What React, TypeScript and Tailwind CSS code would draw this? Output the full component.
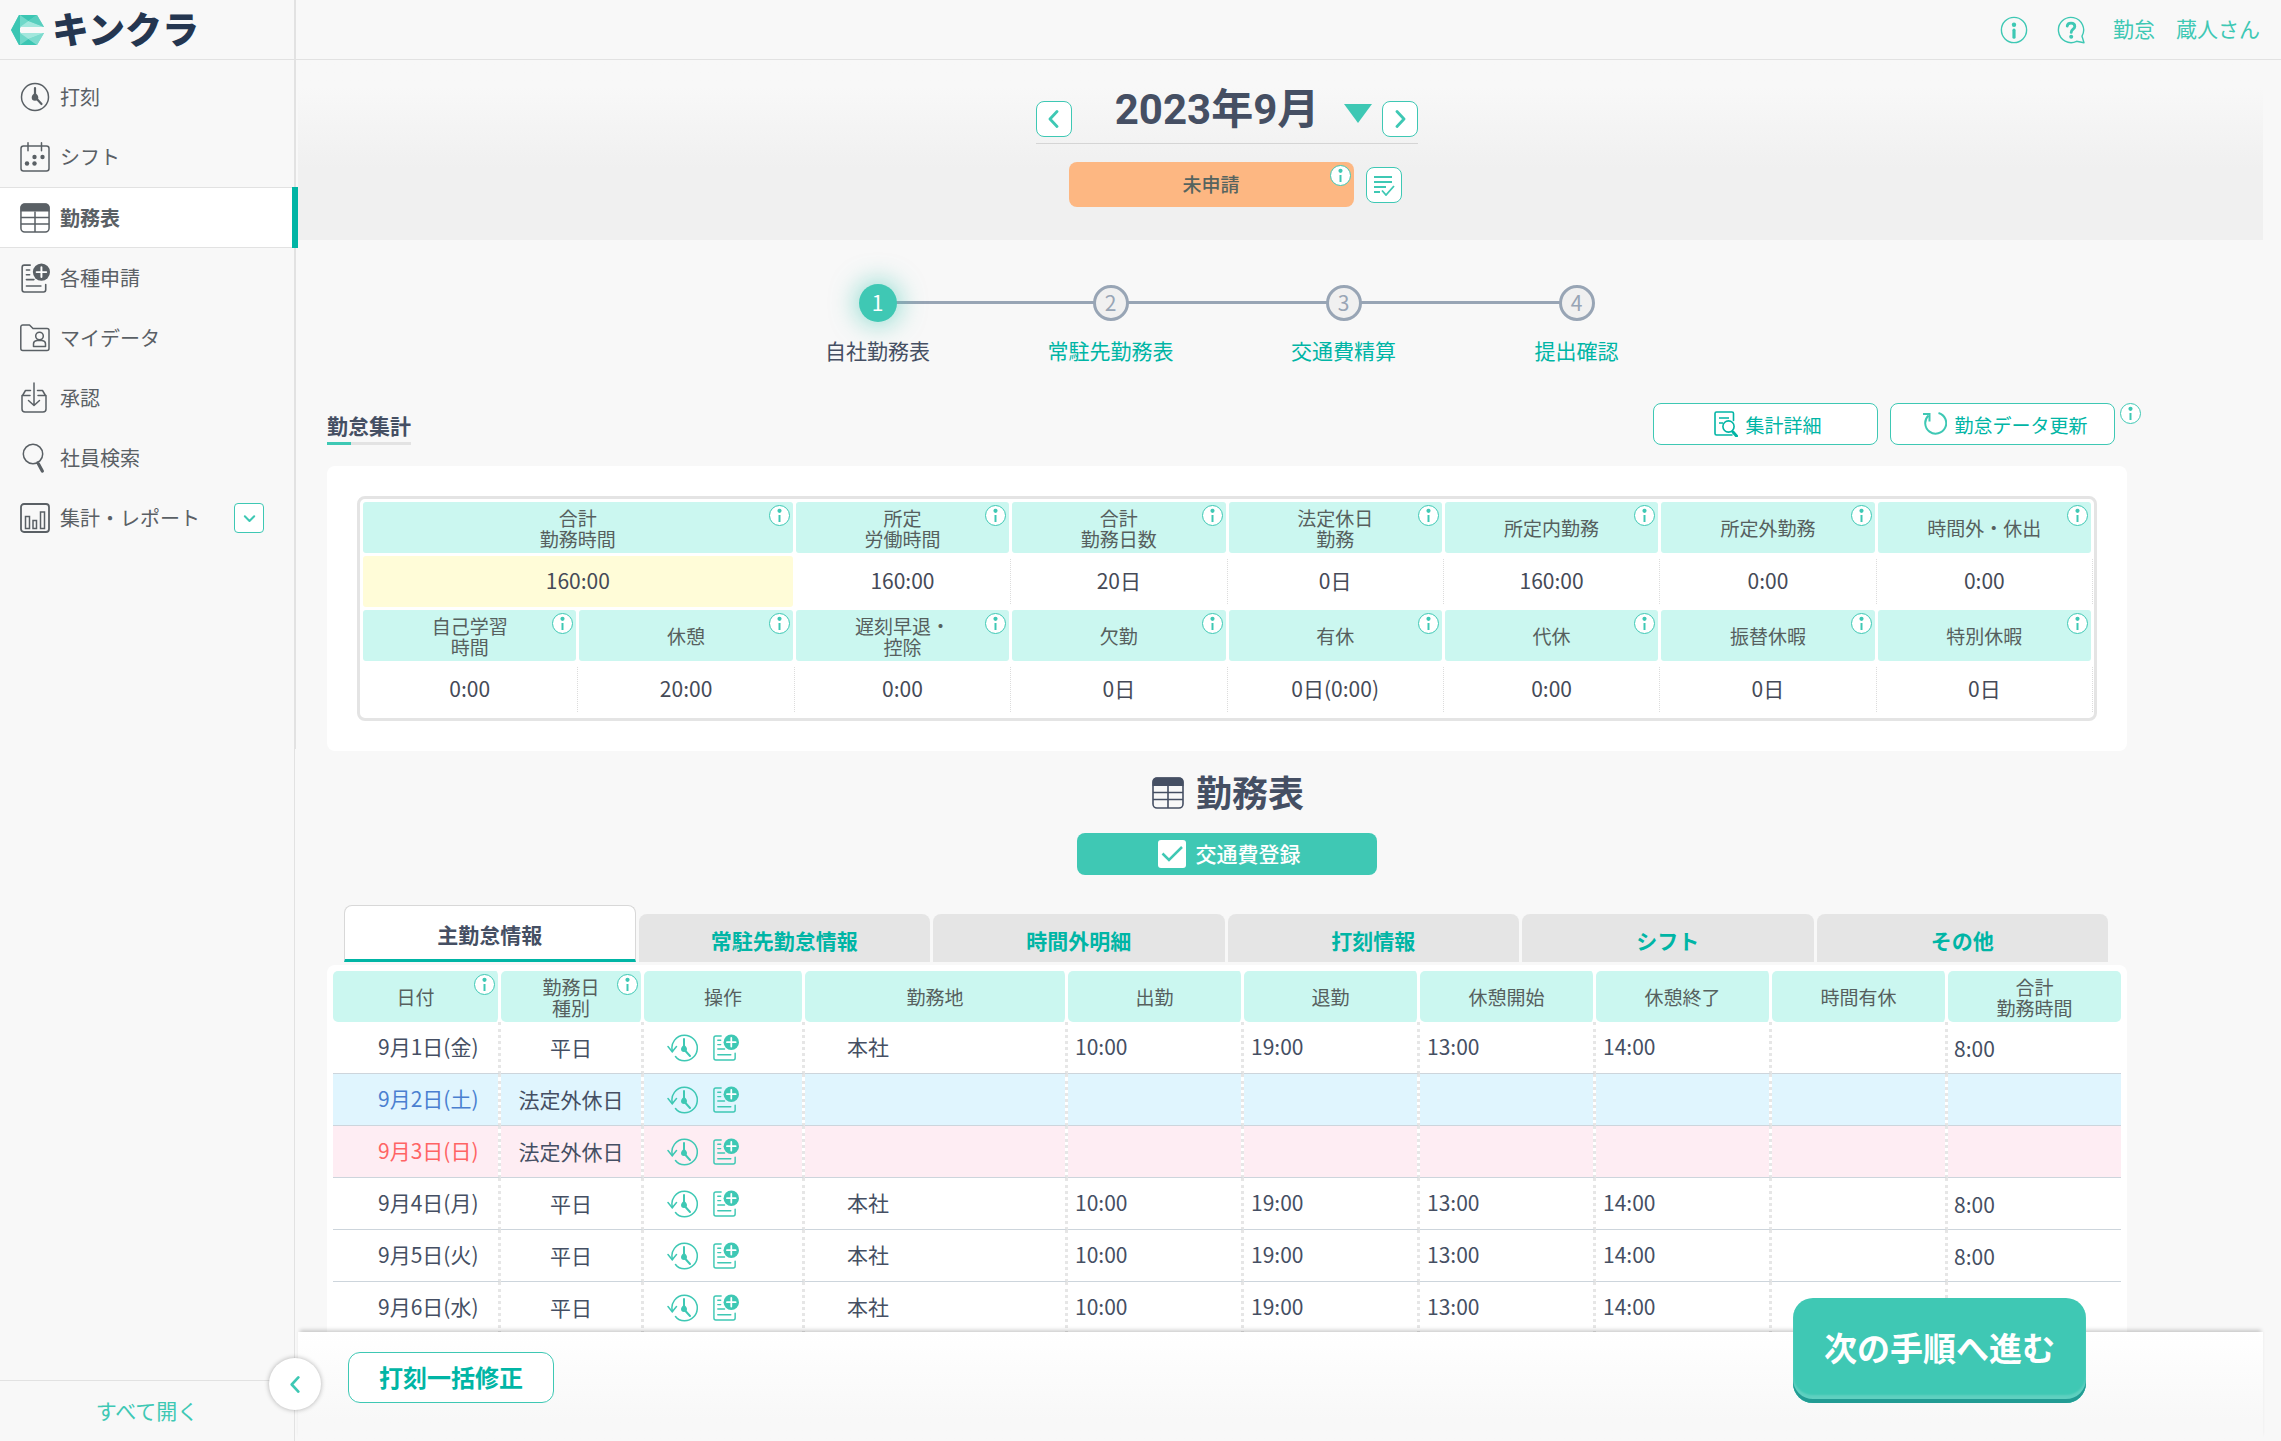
import React from "react";

type IconProps = { className?: string };

const InfoIcon = ({ className = "size-[21px]" }: IconProps) => (
  <svg viewBox="0 0 21 21" className={className} aria-hidden="true">
    <circle cx="10.5" cy="10.5" r="10" fill="#fff" stroke="#3ec8b4" />
    <circle cx="10.5" cy="5.8" r="2.1" fill="#3ec8b4" />
    <path d="M10.5 10v7" stroke="#3ec8b4" strokeWidth="2" />
  </svg>
);

const HeaderInfoIcon = () => (
  <svg viewBox="0 0 28 28" className="size-[28px]" fill="none" stroke="#3ec8b4" aria-hidden="true">
    <circle cx="14" cy="14" r="12.6" strokeWidth="1.4" />
    <circle cx="14" cy="8.8" r="2.2" fill="#3ec8b4" stroke="none" />
    <path d="M14 14.2v7" strokeWidth="3.2" strokeLinecap="round" />
  </svg>
);

const HelpIcon = () => (
  <svg viewBox="0 0 28 28" className="size-[28px]" fill="none" stroke="#3ec8b4" strokeLinejoin="round" aria-hidden="true">
    <path d="M25 20.2A12.6 12.6 0 1 0 19.6 25.3l7.4 1.4z" strokeWidth="1.4" />
    <path d="M10.2 10.2c.3-4 7.6-4 7.6.2 0 2.8-3.6 2.8-3.6 6" strokeWidth="2.8" strokeLinecap="round" />
    <circle cx="14.2" cy="20.8" r="2" fill="#3ec8b4" stroke="none" />
  </svg>
);

const ClockIcon = () => (
  <svg viewBox="0 0 30 30" className="size-[30px]" fill="none" stroke="currentColor" aria-hidden="true">
    <circle cx="15" cy="15" r="13.5" strokeWidth="1.5" />
    <path d="M15 6v9M15 15l6.5 7" strokeWidth="2.2" strokeLinecap="round" />
    <path d="M15 10.5c1.5 1.8 3.3 2.8 3.3 5a3.3 3.3 0 0 1-6.6 0c0-2.2 1.8-3.2 3.3-5z" fill="currentColor" stroke="none" />
  </svg>
);

const ShiftIcon = () => (
  <svg viewBox="0 0 30 30" className="size-[30px]" fill="none" stroke="currentColor" strokeWidth="1.5" aria-hidden="true">
    <rect x="1" y="4" width="28" height="25" rx="2.5" />
    <path d="M8 .8v8M21.5 .8v8" strokeLinecap="round" />
    <g fill="currentColor" stroke="none">
      <circle cx="14.5" cy="15" r="2.2" />
      <circle cx="22.5" cy="15" r="2.2" />
      <circle cx="7" cy="21.5" r="2.2" />
      <circle cx="14.5" cy="21.5" r="2.2" />
    </g>
  </svg>
);

const TableIcon = ({ className = "size-[30px]" }: IconProps) => (
  <svg viewBox="0 0 32 32" className={className} fill="none" stroke="currentColor" aria-hidden="true">
    <rect x="1" y="1" width="30" height="30" rx="4" strokeWidth="1.6" />
    <path d="M.5 9V5A4.5 4.5 0 0 1 5 .5h22A4.5 4.5 0 0 1 31.5 5v4z" fill="currentColor" stroke="none" />
    <path d="M1 15.5h30M1 22.5h30M16 9v22" strokeWidth="1.6" />
  </svg>
);

const FormPlusIcon = ({ className = "size-[30px]" }: IconProps) => (
  <svg viewBox="0 0 28 28" className={className} fill="none" stroke="currentColor" strokeWidth="1.5" strokeLinecap="round" aria-hidden="true">
    <path d="M9.5 2H4A2 2 0 0 0 2 4v21a2 2 0 0 0 2 2h18a2 2 0 0 0 2-2v-5" />
    <path d="M6 6.5h3M6 11h3M6 15.5h7M6 21.5h13.5" />
    <circle cx="20" cy="8.500" r="8" fill="currentColor" stroke="none" />
    <path d="M20 4v9M15.5 8.500h9" stroke="#fff" strokeWidth="1.8" />
  </svg>
);

const FolderIcon = () => (
  <svg viewBox="0 0 30 30" className="size-[30px]" fill="none" stroke="currentColor" strokeWidth="1.5" strokeLinejoin="round" aria-hidden="true">
    <path d="M.8 25.5V4A2 2 0 0 1 2.8 2h6.7L13 5.5h14a2 2 0 0 1 2 2v18a2 2 0 0 1-2 2H2.8a2 2 0 0 1-2-2z" />
    <circle cx="19.5" cy="13" r="3.8" />
    <path d="M13.5 23.5v-2.7c0-2 1.5-3 3.5-3.3h5c2 .3 3.5 1.3 3.5 3.3v2.7z" />
  </svg>
);

const ApproveIcon = () => (
  <svg viewBox="0 0 30 32" className="h-[32px] w-[30px]" fill="none" stroke="currentColor" strokeWidth="1.5" strokeLinecap="round" strokeLinejoin="round" aria-hidden="true">
    <path d="M14 1v22M8.500 18.5l5.5 5 5.500-5" />
    <path d="M10.500 8.500H5.500l-3 5M17.500 8.500h5l3 5M10 13.500H2V27a3 3 0 0 0 3 3h18a3 3 0 0 0 3-3V13.500h-8" />
  </svg>
);

const SearchIcon = () => (
  <svg viewBox="0 0 30 30" className="size-[30px]" fill="none" stroke="currentColor" aria-hidden="true">
    <circle cx="13" cy="11" r="9.7" strokeWidth="1.5" />
    <path d="M17 18.5l2 4" strokeWidth="1.5" />
    <path d="M18.5 21l3.8 7" strokeWidth="3.2" strokeLinecap="round" />
  </svg>
);

const ReportIcon = () => (
  <svg viewBox="0 0 30 30" className="size-[30px]" fill="none" stroke="currentColor" strokeWidth="1.5" aria-hidden="true">
    <rect x="1" y="1" width="28" height="28" rx="3" strokeWidth="1.8" />
    <path d="M5.5 13.5h4v12h-4zM13 17.5h3.5v8H13zM20.5 9h4v16.5h-4z" />
  </svg>
);

const Chevron = ({ d, className = "size-[18px]" }: { d: string; className?: string }) => (
  <svg viewBox="0 0 18 18" className={className} fill="none" stroke="#3ec8b4" strokeWidth="2.8" strokeLinecap="round" strokeLinejoin="round" aria-hidden="true">
    <path d={d} />
  </svg>
);
const LEFT = "M12 1.5L5 9l7 7.5";
const RIGHT = "M6 1.5L13 9l-7 7.5";

const HistoryIcon = () => (
  <svg viewBox="0 0 31 28" className="h-[28px] w-[31px]" fill="none" stroke="currentColor" strokeWidth="1.5" strokeLinecap="round" aria-hidden="true">
    <path d="M5.5 17.5A12.6 12.6 0 0 1 17.500 1.200a12.800 12.800 0 0 1 0 25.600c-4 0-7-1.500-9-4.300" />
    <path d="M1 12.5l4.2 5.2 4.3-5.2" />
    <path d="M17 5v9M18.5 17l4.5 5" strokeWidth="2" />
    <path d="M17 10.5c1 1.5 3 2.500 3 4.5a3 3 0 0 1-6 0c0-2 2-3 3-4.5z" fill="currentColor" stroke="none" />
  </svg>
);

const Logo = () => (
  <svg viewBox="0 0 33 30" className="h-[30px] w-[33px]" aria-hidden="true">
    <path d="M8 0h18l7 12H10v6h23l-7 12H8L0 15z" fill="#6fd8c9" />
    <path d="M8 0L0 15l8 15h1V0z" fill="#3cc6b3" />
    <path d="M9 0h17l-8.500 6z" fill="#3cc6b3" />
    <path d="M9 30h17l-8.500-6z" fill="#3cc6b3" />
    <path d="M9 12l8.500-6 15.500 6z" fill="#a3e7dd" />
    <path d="M9 18l8.500 6 15.500-6z" fill="#a3e7dd" />
    <path d="M17.500 6L26 0l7 12z" fill="#58cebe" />
    <path d="M17.500 24l8.500 6 7-12z" fill="#7ddbce" />
    <path d="M9 12.500h24v5H9z" fill="#f8f8f8" />
  </svg>
);

const NAV = [
  { label: "打刻", icon: <ClockIcon /> },
  { label: "シフト", icon: <ShiftIcon /> },
  { label: "勤務表", icon: <TableIcon />, active: true },
  { label: "各種申請", icon: <FormPlusIcon /> },
  { label: "マイデータ", icon: <FolderIcon /> },
  { label: "承認", icon: <ApproveIcon /> },
  { label: "社員検索", icon: <SearchIcon /> },
  { label: "集計・レポート", icon: <ReportIcon />, expandable: true },
];

function Sidebar() {
  return (
    <aside className="relative flex w-[295px] shrink-0 flex-col border-r border-[#e2e2e2]">
      <div className="absolute top-0 left-full h-[52%] w-[2px] bg-[#e2e2e2]" />
      <a href="#" className="flex h-[60px] shrink-0 items-center gap-[8px] border-b border-[#e2e2e2] pl-[11px]">
        <Logo />
        <span className="pb-[3px] text-[37px] leading-[40px] font-black text-[#243650]">キンクラ</span>
      </a>
      <nav className="flex flex-1 flex-col pt-[7px]">
        {NAV.map((n) => (
          <div
            key={n.label}
            className={
              n.active
                ? "relative flex h-[61px] items-center border-y border-[#e2e2e2] bg-white font-bold"
                : "relative flex h-[60px] items-center"
            }
          >
            <a href="#" className="flex flex-1 items-center gap-[10px] pl-[20px] text-[20px] leading-[30px] text-[#5a6065]">
              {n.icon}
              {n.label}
            </a>
            {n.active && <span className="absolute -inset-y-px -right-[4px] w-[6px] bg-[#00b5a5]" />}
            {n.expandable && (
              <button
                aria-label="集計・レポートを開く"
                className="mr-[30px] flex size-[30px] items-center justify-center rounded-[4px] border border-[#3ec8b4] bg-white"
              >
                <Chevron d="M2.5 6L9 12.5 15.5 6" className="size-[13px]" />
              </button>
            )}
          </div>
        ))}
      </nav>
      <div className="flex h-[61px] items-center justify-center border-t border-[#e2e2e2]">
        <button className="pb-[2px] text-[21px] leading-[30px] text-[#3ec8b4]">すべて開く</button>
      </div>
      <button
        aria-label="メニューを閉じる"
        className="absolute -right-[27px] bottom-[31px] z-20 flex size-[52px] items-center justify-center rounded-full bg-white shadow-[0_0_5px_rgba(0,0,0,0.3)]"
      >
        <Chevron d={LEFT} className="size-[17px]" />
      </button>
    </aside>
  );
}

function TopBar() {
  return (
    <header className="flex h-[60px] shrink-0 items-center justify-end border-b border-[#e2e2e2] pr-[21px] text-[#3ec8b4]">
      <button aria-label="お知らせ">
        <HeaderInfoIcon />
      </button>
      <button aria-label="ヘルプ" className="ml-[29px]">
        <HelpIcon />
      </button>
      <a href="#" className="ml-[28px] pb-[3px] text-[21px] leading-[30px]">
        勤怠　蔵人さん
      </a>
    </header>
  );
}

function MonthHero() {
  const square = "flex size-[36px] items-center justify-center rounded-[8px] border border-[#3ec8b4] bg-white";
  return (
    <section className="mr-[18px] ml-[3px] bg-linear-to-b from-[#f8f8f8] from-15% to-[#f0f0f0] to-60%">
      <div className="mr-[136px] ml-[29px] flex flex-col items-center pt-[23px] pb-[33px]">
        <div className="flex items-end border-b border-[#d5d5d5] pb-[6px]">
          <button aria-label="前の月" className={square}>
            <Chevron d={LEFT} />
          </button>
          <h1 className="ml-[43px] font-[Roboto,'Noto_Sans_CJK_JP',sans-serif] text-[42px] leading-[54px] font-bold text-[#454f63]">
            2023年9月
          </h1>
          <button aria-label="月を選択" className="ml-[25px] pb-[14px]">
            <svg viewBox="0 0 28 19" className="h-[19px] w-[28px]" aria-hidden="true">
              <path d="M0 0h28L14 19z" fill="#3ec8b4" />
            </svg>
          </button>
          <button aria-label="次の月" className={"ml-[10px] " + square}>
            <Chevron d={RIGHT} />
          </button>
        </div>
        <div className="mt-[18px] flex items-center gap-[12px] pl-[16px]">
          <div className="relative flex h-[45px] w-[285px] items-center justify-center rounded-[8px] bg-[#fdb782] text-[19px] font-medium text-[#56645f]">
            未申請
            <button aria-label="申請状態の説明" className="absolute top-[3px] right-[3px]">
              <InfoIcon />
            </button>
          </div>
          <button aria-label="申請内容" className={square}>
            <svg viewBox="0 0 22 22" className="size-[22px]" fill="none" stroke="#3ec8b4" strokeWidth="1.8" aria-hidden="true">
              <path d="M1 3h18M1 8h18M1 13h12M1 18h6" />
              <path d="M9 16.5l4 4.500 8-9" />
            </svg>
          </button>
        </div>
      </div>
    </section>
  );
}

const STEPS = ["自社勤務表", "常駐先勤務表", "交通費精算", "提出確認"];

function Stepper() {
  return (
    <ol className="mx-auto grid w-[932px] grid-cols-4 pt-[44px]">
      {STEPS.map((s, i) => (
        <li key={s} className="relative flex flex-col items-center gap-[16px]">
          {i > 0 && <span className="absolute top-[17px] right-1/2 h-[3px] w-full bg-[#98a5b5]" />}
          <span
            className={
              i === 0
                ? "z-10 flex size-[38px] items-center justify-center rounded-full bg-[#3fc8b4] text-[21px] text-white shadow-[0_0_24px_4px_rgba(63,200,180,0.5)]"
                : "z-10 my-px flex size-[36px] items-center justify-center rounded-full border-3 border-[#98a5b5] bg-[#f0f0f0] text-[21px] text-[#98a5b5]"
            }
          >
            {i + 1}
          </span>
          {i === 0 ? (
            <span className="text-[21px] leading-[24px] text-[#454f63]">{s}</span>
          ) : (
            <a href="#" className="text-[21px] leading-[24px] text-[#00b5a5]">
              {s}
            </a>
          )}
        </li>
      ))}
    </ol>
  );
}

type Head = { lines: string[]; wide?: boolean };
const SUM_HEAD_1: Head[] = [
  { lines: ["合計", "勤務時間"], wide: true },
  { lines: ["所定", "労働時間"] },
  { lines: ["合計", "勤務日数"] },
  { lines: ["法定休日", "勤務"] },
  { lines: ["所定内勤務"] },
  { lines: ["所定外勤務"] },
  { lines: ["時間外・休出"] },
];
const SUM_VAL_1 = ["160:00", "160:00", "20日", "0日", "160:00", "0:00", "0:00"];
const SUM_HEAD_2: Head[] = [
  { lines: ["自己学習", "時間"] },
  { lines: ["休憩"] },
  { lines: ["遅刻早退・", "控除"] },
  { lines: ["欠勤"] },
  { lines: ["有休"] },
  { lines: ["代休"] },
  { lines: ["振替休暇"] },
  { lines: ["特別休暇"] },
];
const SUM_VAL_2 = ["0:00", "20:00", "0:00", "0日", "0日(0:00)", "0:00", "0日", "0日"];

const HeadText = ({ lines }: { lines: string[] }) => (
  <>
    {lines.map((l) => (
      <span key={l} className="block">
        {l}
      </span>
    ))}
  </>
);

function SummaryHeadRow({ cells }: { cells: Head[] }) {
  return (
    <tr>
      {cells.map((c) => (
        <th
          key={c.lines.join("")}
          colSpan={c.wide ? 2 : 1}
          className="relative h-[51px] rounded-[3px] bg-[#cbf7f0] p-0 text-[19px] leading-[21px] font-normal text-[#56605e]"
        >
          <HeadText lines={c.lines} />
          <button aria-label={c.lines.join("") + "の説明"} className="absolute top-[3px] right-[3px]">
            <InfoIcon />
          </button>
        </th>
      ))}
    </tr>
  );
}

function SummaryValueRow({ values, wideFirst }: { values: string[]; wideFirst?: boolean }) {
  const cell = "relative h-[51px] px-0 pt-0 pb-[3px] text-center text-[21px] leading-[24px] text-[#454a57]";
  return (
    <tr>
      {values.map((v, i) =>
        wideFirst && i === 0 ? (
          <td key={i} colSpan={2} className={cell + " rounded-[3px] bg-[#fffcd8]"}>
            {v}
          </td>
        ) : (
          <td key={i} className={cell}>
            {v}
            <span className="absolute inset-y-[3px] -right-[2px] border-r border-dotted border-[#dcdcdc]" />
          </td>
        ),
      )}
    </tr>
  );
}

function Summary() {
  const outline =
    "flex h-[42px] w-[225px] items-center justify-center gap-[7px] rounded-[8px] border border-[#3ec8b4] bg-white pl-[5px] text-[19px] leading-[24px] text-[#00b5a5]";
  return (
    <section className="mt-[41px]">
      <div className="flex items-end justify-between">
        <h2 className="relative border-b-3 border-[#e3e3e3] pb-[5px] text-[21px] leading-[24px] font-bold text-[#454f63]">
          勤怠集計
          <span className="absolute -bottom-[3px] left-0 h-[3px] w-[24px] bg-[#3ec8b4]" />
        </h2>
        <div className="flex gap-[12px] pr-[12px]">
          <button className={outline}>
            <svg viewBox="0 0 24 26" className="h-[26px] w-[24px]" fill="none" stroke="#00b5a5" strokeWidth="1.6" aria-hidden="true">
              <path d="M19.5 9.5V2.5a1.5 1.5 0 0 0-1.5-1.5H2.5A1.5 1.5 0 0 0 1 2.5v20A1.5 1.5 0 0 0 2.5 24H18" strokeLinecap="round" />
              <path d="M5 7h10M5 12h4" />
              <circle cx="14.5" cy="15.5" r="5.6" />
              <path d="M19 21l3.5 4" strokeWidth="3" strokeLinecap="round" />
            </svg>
            <span className="pt-[2px]">集計詳細</span>
          </button>
          <div className="relative">
            <button className={outline}>
              <svg viewBox="0 0 25 26" className="h-[26px] w-[25px]" fill="none" stroke="#3ec8b4" strokeWidth="2" aria-hidden="true">
                <path d="M6.500 4.500A10.500 10.500 0 1 0 16.500 2" />
                <path d="M1 3h6.500v7.500" />
              </svg>
              <span className="pt-[2px]">勤怠データ更新</span>
            </button>
            <button aria-label="勤怠データ更新の説明" className="absolute top-0 left-full ml-[5px]">
              <InfoIcon />
            </button>
          </div>
        </div>
      </div>
      <div className="mt-[21px] rounded-[8px] bg-white p-[30px]">
        <div className="rounded-[8px] border-3 border-[#e4e4e4]">
          <table className="w-full table-fixed border-separate border-spacing-[3px]">
            <tbody>
              <SummaryHeadRow cells={SUM_HEAD_1} />
              <SummaryValueRow values={SUM_VAL_1} wideFirst />
              <SummaryHeadRow cells={SUM_HEAD_2} />
              <SummaryValueRow values={SUM_VAL_2} />
            </tbody>
          </table>
        </div>
      </div>
    </section>
  );
}

const TABS = ["主勤怠情報", "常駐先勤怠情報", "時間外明細", "打刻情報", "シフト", "その他"];

const COLUMNS = [
  { lines: ["日付"], width: "w-[168px]", info: true },
  { lines: ["勤務日", "種別"], width: "w-[143px]", info: true },
  { lines: ["操作"], width: "w-[161px]" },
  { lines: ["勤務地"], width: "w-[263px]" },
  { lines: ["出勤"], width: "w-[176px]" },
  { lines: ["退勤"], width: "w-[176px]" },
  { lines: ["休憩開始"], width: "w-[176px]" },
  { lines: ["休憩終了"], width: "w-[176px]" },
  { lines: ["時間有休"], width: "w-[176px]" },
  { lines: ["合計", "勤務時間"], width: "" },
];

type Day = { date: string; kind: string; tone: "plain" | "sat" | "sun" };
const DAYS: Day[] = [
  { date: "9月1日(金)", kind: "平日", tone: "plain" },
  { date: "9月2日(土)", kind: "法定外休日", tone: "sat" },
  { date: "9月3日(日)", kind: "法定外休日", tone: "sun" },
  { date: "9月4日(月)", kind: "平日", tone: "plain" },
  { date: "9月5日(火)", kind: "平日", tone: "plain" },
  { date: "9月6日(水)", kind: "平日", tone: "plain" },
];
const TONE = {
  plain: { bg: "bg-white", date: "text-[#454f63]" },
  sat: { bg: "bg-[#e0f5fe]", date: "text-[#4a7fd0]" },
  sun: { bg: "bg-[#feedf3]", date: "text-[#ff6464]" },
};

function DayRow({ day }: { day: Day }) {
  const tone = TONE[day.tone];
  const work = day.tone === "plain";
  const cell =
    "h-[52px] border-r-3 border-b border-r-[#e6e6e6] border-b-[#cdd5dc] [border-right-style:dotted] bg-clip-padding pt-0 last:border-r-0 " + tone.bg;
  return (
    <tr>
      <td className={cell + " pb-[3px] pl-[45px] " + tone.date}>{day.date}</td>
      <td className={cell + " pb-[1px] text-center"}>{day.kind}</td>
      <td className={cell + " pb-0"}>
        <div className="flex items-center gap-[14px] pl-[23px] text-[#3ec8b4]">
          <button aria-label={day.date + " 打刻修正"}>
            <HistoryIcon />
          </button>
          <button aria-label={day.date + " 申請"}>
            <FormPlusIcon className="size-[27px]" />
          </button>
        </div>
      </td>
      <td className={cell + " pb-[3px] pl-[42px]"}>{work && "本社"}</td>
      {["10:00", "19:00", "13:00", "14:00"].map((t) => (
        <td key={t} className={cell + " pb-[3px] pl-[7px]"}>
          {work && t}
        </td>
      ))}
      <td className={cell + " pb-0"} />
      <td className={cell + " pb-0 pl-[6px]"}>{work && "8:00"}</td>
    </tr>
  );
}

function TimeSheet() {
  return (
    <section className="mt-[20px]">
      <h2 className="flex items-center justify-center gap-[12px] pl-[2px] text-[36px] font-bold text-[#454f63]">
        <TableIcon className="size-[32px]" />
        <span className="pb-[4px] leading-[40px]">勤務表</span>
      </h2>
      <button className="mx-auto mt-[18px] flex h-[42px] w-[300px] items-center justify-center gap-[10px] rounded-[8px] bg-[#3fc8b4] pl-[4px] text-[21px] leading-[24px] font-medium text-white">
        <svg viewBox="0 0 28 28" className="size-[28px]" aria-hidden="true">
          <rect width="28" height="28" rx="3" fill="#fff" />
          <path d="M4.5 13.5l6.5 6.5L24 7" fill="none" stroke="#3fc8b4" strokeWidth="2.5" />
        </svg>
        <span className="pb-[3px]">交通費登録</span>
      </button>
      <div role="tablist" className="mt-[30px] mr-[19px] ml-[17px] grid grid-cols-6 items-end gap-[3px]">
        {TABS.map((t, i) => (
          <button
            key={t}
            role="tab"
            aria-selected={i === 0}
            className={
              i === 0
                ? "h-[57px] rounded-t-[8px] border border-b-3 border-[#d8d8d8] border-b-[#00b5a5] bg-white pt-[2px] text-[21px] leading-[30px] font-bold text-[#454f63]"
                : "h-[48px] rounded-t-[8px] bg-[#e5e5e5] pt-[3px] text-[21px] leading-[30px] font-bold text-[#00b5a5]"
            }
          >
            {t}
          </button>
        ))}
      </div>
      <div className="mt-[3px] rounded-t-[8px] bg-white px-[6px] pt-[6px]">
        <table className="w-full table-fixed border-separate border-spacing-0 text-[21px] leading-[24px] text-[#454f63]">
          <thead>
            <tr>
              {COLUMNS.map((c) => (
                <th
                  key={c.lines.join("")}
                  className={
                    "relative h-[51px] rounded-[5px] border-r-3 border-white bg-[#cbf7f0] bg-clip-padding p-0 text-[19px] leading-[21px] font-normal text-[#56605e] last:border-r-0 " +
                    c.width
                  }
                >
                  <HeadText lines={c.lines} />
                  {c.info && (
                    <button aria-label={c.lines.join("") + "の説明"} className="absolute top-[3px] right-[3px]">
                      <InfoIcon />
                    </button>
                  )}
                </th>
              ))}
            </tr>
          </thead>
          <tbody>
            {DAYS.map((d) => (
              <DayRow key={d.date} day={d} />
            ))}
          </tbody>
        </table>
      </div>
    </section>
  );
}

function ActionBar() {
  return (
    <footer className="relative z-10 mr-[18px] ml-[3px] flex h-[109px] shrink-0 items-start bg-linear-to-b from-white to-[#f8f8f8] to-80% pt-[20px] pl-[50px] shadow-[0_-4px_4px_-2px_rgba(0,0,0,0.2)]">
      <button className="h-[51px] w-[206px] rounded-[12px] border border-[#3ec8b4] bg-white pb-[2px] text-[24px] leading-[30px] font-bold text-[#00b5a5]">
        打刻一括修正
      </button>
      <button className="absolute right-[177px] bottom-[38px] h-[105px] w-[293px] rounded-[20px] bg-[#3fc8b4] pb-[7px] text-[33px] leading-[40px] font-bold text-white shadow-[inset_0_-4px_0_#229c94,inset_0_-8px_2px_#5fd0c0]">
        次の手順へ進む
      </button>
    </footer>
  );
}

export default function App() {
  return (
    <div
      lang="ja"
      className="flex h-screen overflow-hidden bg-[#f8f8f8] font-['Noto_Sans_CJK_JP','Noto_Sans',sans-serif]"
    >
      <Sidebar />
      <div className="flex min-w-0 flex-1 flex-col">
        <TopBar />
        <main className="min-h-0 flex-1 overflow-y-auto [scrollbar-width:none]">
          <MonthHero />
          <div className="mr-[154px] ml-[32px]">
            <Stepper />
            <Summary />
            <TimeSheet />
          </div>
        </main>
        <ActionBar />
      </div>
    </div>
  );
}
